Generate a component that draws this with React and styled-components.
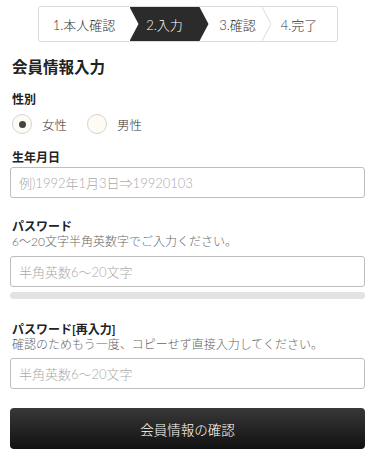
import React, { useState } from 'react';
import styled, { createGlobalStyle } from 'styled-components';

const GlobalStyle = createGlobalStyle`
  * {
    box-sizing: border-box;
  }
  body {
    margin: 0;
    background: #fff;
    font-family: Lato, 'Noto Sans CJK JP', sans-serif;
    font-weight: 300;
    color: #333;
  }
`;

const steps = ['1.本人確認', '2.入力', '3.確認', '4.完了'];

const Stepper = () => {
  return (
    <StepperBox>
      <Step width="91px">{steps[0]}</Step>
      <ActiveStep>{steps[1]}</ActiveStep>
      <Step width="62px" pad="14px">
        {steps[2]}
      </Step>
      <Chevron viewBox="0 0 9 34" preserveAspectRatio="none">
        <polyline points="0,0 9,17 0,34" fill="none" stroke="#dcdcdc" strokeWidth="1" />
      </Chevron>
      <Step grow>{steps[3]}</Step>
    </StepperBox>
  );
};

const Radio = ({ checked, label, onClick }) => {
  return (
    <RadioItem onClick={onClick}>
      <RadioCircle>{checked && <RadioDot />}</RadioCircle>
      <RadioText>{label}</RadioText>
    </RadioItem>
  );
};

const App = () => {
  const [gender, setGender] = useState('female');

  return (
    <Page>
      <GlobalStyle />
      <Stepper />
      <Title>会員情報入力</Title>

      <Label top="14px">性別</Label>
      <RadioRow>
        <Radio label="女性" checked={gender === 'female'} onClick={() => setGender('female')} />
        <Radio label="男性" checked={gender === 'male'} onClick={() => setGender('male')} />
      </RadioRow>

      <Label top="16px">生年月日</Label>
      <Input top="1px" placeholder="例)1992年1月3日⇒19920103" />

      <Label top="21px">パスワード</Label>
      <Hint>6〜20文字半角英数字でご入力ください。</Hint>
      <Input top="7px" type="password" placeholder="半角英数6〜20文字" />
      <StrengthBar />

      <Label top="23px">パスワード[再入力]</Label>
      <Hint>確認のためもう一度、コピーせず直接入力してください。</Hint>
      <Input top="6px" type="password" placeholder="半角英数6〜20文字" />

      <SubmitButton>会員情報の確認</SubmitButton>
    </Page>
  );
};

const Page = styled.div`
  display: flex;
  flex-direction: column;
  width: 375px;
  padding: 6px 10px 0;
`;
const StepperBox = styled.div`
  display: flex;
  align-self: center;
  width: 300px;
  height: 36px;
  border: 1px solid #dcdcdc;
  border-radius: 3px;
  overflow: hidden;
`;
const Step = styled.div`
  display: flex;
  align-items: center;
  justify-content: center;
  width: ${(p) => (p.grow ? 'auto' : p.width)};
  flex: ${(p) => (p.grow ? 1 : 'none')};
  padding-left: ${(p) => p.pad || 0};
  font-size: 13px;
  color: #333;
`;
const ActiveStep = styled.div`
  position: relative;
  z-index: 1;
  display: flex;
  align-items: center;
  justify-content: center;
  width: 79px;
  margin-right: -9px;
  padding-right: 9px;
  background: #2b2b2b;
  color: #fff;
  font-size: 13px;
  clip-path: polygon(0 0, 70px 0, 100% 50%, 70px 100%, 0 100%, 9px 50%);
`;
const Chevron = styled.svg`
  flex: none;
  width: 9px;
  height: 34px;
  margin-right: -9px;
`;
const Title = styled.h1`
  margin: 14px 0 0 2px;
  font-size: 15.5px;
  line-height: 22px;
  font-weight: 700;
  color: #222;
`;
const Label = styled.div`
  margin: ${(p) => p.top} 0 0 2px;
  font-size: 12px;
  line-height: 16px;
  font-weight: 700;
  color: #222;
`;
const Hint = styled.div`
  margin-left: 2px;
  font-size: 12px;
  line-height: 14px;
  color: #666;
`;
const RadioRow = styled.div`
  display: flex;
  gap: 20px;
  margin: 6px 0 0 2px;
`;
const RadioItem = styled.label`
  display: flex;
  align-items: center;
  gap: 10px;
  height: 20px;
  cursor: pointer;
`;
const RadioCircle = styled.span`
  display: flex;
  align-items: center;
  justify-content: center;
  width: 20px;
  height: 20px;
  border: 1px solid #d4d4d4;
  border-radius: 50%;
  background: #fdfbf3;
`;
const RadioDot = styled.span`
  width: 7px;
  height: 7px;
  border-radius: 50%;
  background: #444;
`;
const RadioText = styled.span`
  font-size: 12.5px;
  color: #333;
`;
const Input = styled.input`
  margin-top: ${(p) => p.top};
  width: 100%;
  height: 31px;
  padding: 0 8px;
  border: 1px solid #bdbdbd;
  border-radius: 3px;
  background: #fff;
  font-family: Lato, 'Noto Sans CJK JP', sans-serif;
  font-weight: 300;
  font-size: 13px;
  color: #333;
  outline: none;

  &::placeholder {
    color: #aaa;
  }
`;
const StrengthBar = styled.div`
  margin-top: 5px;
  height: 7px;
  border-radius: 4px;
  background: #e3e3e3;
`;
const SubmitButton = styled.button`
  margin-top: 19px;
  width: 100%;
  height: 41px;
  border: none;
  border-radius: 4px;
  background: linear-gradient(#383838, #111);
  color: #fff;
  font-family: Lato, 'Noto Sans CJK JP', sans-serif;
  font-weight: 300;
  font-size: 13.5px;
  cursor: pointer;
`;

export default App;
